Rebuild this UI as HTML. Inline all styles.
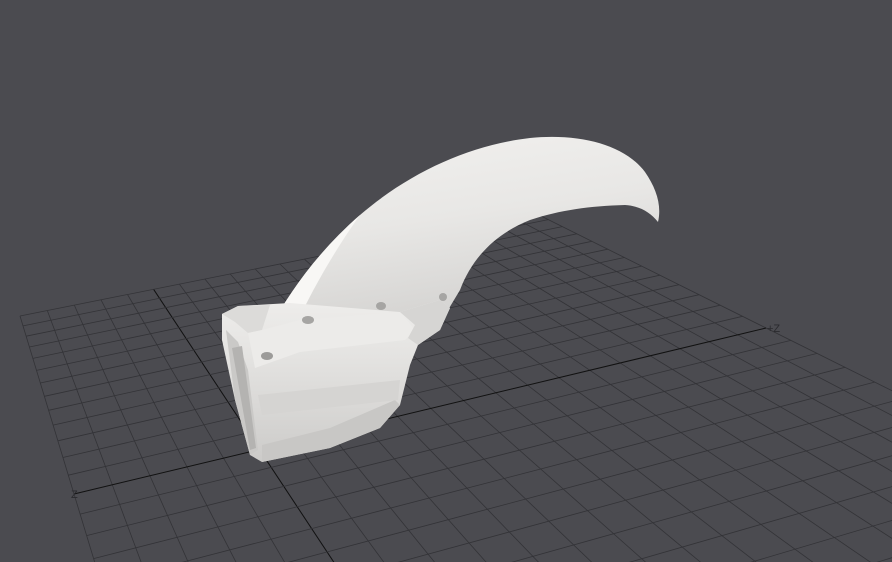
<!DOCTYPE html>
<html><head><meta charset="utf-8"><style>
html,body{margin:0;padding:0;background:#4b4b50;width:892px;height:562px;overflow:hidden}
svg{display:block}
</style></head><body>
<svg id="s" width="892" height="562" viewBox="0 0 892 562" xmlns="http://www.w3.org/2000/svg">
<defs>
<linearGradient id="hg" x1="0" y1="0" x2="0.3" y2="1">
<stop offset="0" stop-color="#f2f1ef"/><stop offset="0.5" stop-color="#e8e7e5"/><stop offset="1" stop-color="#d3d2d0"/>
</linearGradient>
<linearGradient id="fg" x1="0" y1="0" x2="0" y2="1">
<stop offset="0" stop-color="#eeedeb"/><stop offset="0.35" stop-color="#e4e3e1"/><stop offset="0.6" stop-color="#dbdad8"/><stop offset="1" stop-color="#cccbc9"/>
</linearGradient>
</defs>
<g id="grid"></g>
<text x="71" y="498" font-family="Liberation Sans, sans-serif" font-size="11" fill="#2a2a2e">Z</text>
<text x="767" y="332" font-family="Liberation Sans, sans-serif" font-size="11" fill="#2a2a2e">+Z</text>
<path d="M268,332 C290,290 320,250 360,215 C410,172 470,145 530,138 C580,133 625,145 645,172 C656,188 662,205 658,222 C650,212 640,206 625,205 C590,206 560,210 530,220 C495,234 472,258 460,290 L448,310 Z" fill="url(#hg)"/>
<path d="M268,332 C290,290 320,250 360,215 C335,250 312,290 296,325 Z" fill="#f8f7f5"/>
<path d="M222,314 L238,306 L290,303 L400,312 L440,300 L450,308 L440,330 L418,345 L410,365 L400,405 L380,428 L330,448 L262,462 L250,455 L235,400 L222,340 Z" fill="url(#fg)"/>
<path d="M222,314 L238,306 L270,305 L262,330 L248,333 L235,322 Z" fill="#dcdbd9"/>
<path d="M248,333 L262,330 L300,320 L400,312 L415,330 L405,340 L300,352 L255,368 Z" fill="#ecebe9"/>
<path d="M400,312 L440,300 L450,308 L440,330 L418,345 L408,338 L415,325 Z" fill="#d6d5d3"/>
<path d="M226,330 L238,342 L248,370 L258,450 L250,455 L235,400 Z" fill="#cac9c7"/>
<path d="M232,348 L242,346 L256,448 L250,450 Z" fill="#b4b3b1"/>
<path d="M262,462 L330,448 L380,428 L400,405 L395,400 L330,428 L262,445 Z" fill="#c8c7c5"/>
<path d="M258,395 L400,380 L398,400 L262,415 Z" fill="#d5d4d2"/>
<ellipse cx="267" cy="356" rx="6" ry="4" fill="#9c9b99"/>
<ellipse cx="308" cy="320" rx="6" ry="4" fill="#a6a5a3"/>
<ellipse cx="381" cy="306" rx="5" ry="4" fill="#a6a5a3"/>
<ellipse cx="443" cy="297" rx="4" ry="4" fill="#a6a5a3"/>
</svg>
<script>
(function(){
function solve(A,b){var n=b.length;for(var i=0;i<n;i++){var m=i;for(var k=i+1;k<n;k++)if(Math.abs(A[k][i])>Math.abs(A[m][i]))m=k;var t=A[i];A[i]=A[m];A[m]=t;var tb=b[i];b[i]=b[m];b[m]=tb;for(var k=i+1;k<n;k++){var f=A[k][i]/A[i][i];for(var j=i;j<n;j++)A[k][j]-=f*A[i][j];b[k]-=f*b[i];}}var x=new Array(n);for(var i=n-1;i>=0;i--){var s=b[i];for(var j=i+1;j<n;j++)s-=A[i][j]*x[j];x[i]=s/A[i][i];}return x;}
var U=21;
var src=[[0,0],[U,0],[0,13],[U,13]],dst=[[20,316],[535,213],[74,494],[766,328]];
var A=[],b=[];
for(var i=0;i<4;i++){var u=src[i][0],v=src[i][1],X=dst[i][0],Y=dst[i][1];
A.push([u,v,1,0,0,0,-u*X,-v*X]);b.push(X);A.push([0,0,0,u,v,1,-u*Y,-v*Y]);b.push(Y);}
var h=solve(A,b);
function P(u,v){var w=h[6]*u+h[7]*v+1;return [(h[0]*u+h[1]*v+h[2])/w,(h[3]*u+h[4]*v+h[5])/w];}
var V=24;
var g=document.getElementById('grid'),s='';
function line(a,c,col,wd){s+='<line x1="'+a[0].toFixed(1)+'" y1="'+a[1].toFixed(1)+'" x2="'+c[0].toFixed(1)+'" y2="'+c[1].toFixed(1)+'" stroke="'+col+'" stroke-width="'+wd+'"/>';}
for(var u=0;u<=U;u++)line(P(u,0),P(u,V),u==5?'#111':'#333337',u==5?1:0.8);
for(var v=0;v<=V;v++)line(P(0,v),P(U,v),v==13?'#111':'#333337',v==13?1:0.8);
g.innerHTML=s;
})();
</script>
</body></html>
